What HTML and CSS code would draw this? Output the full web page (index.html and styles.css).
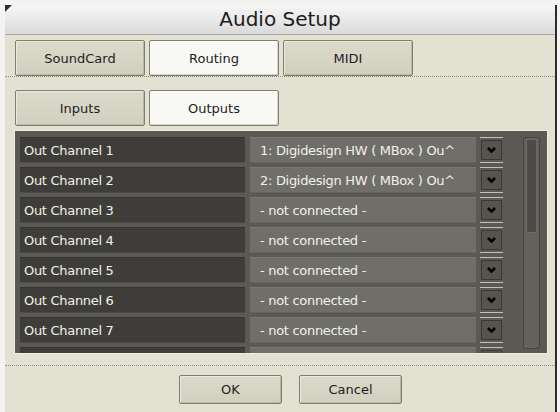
FILE: index.html
```html
<!DOCTYPE html>
<html>
<head>
<meta charset="utf-8">
<link rel="stylesheet" href="styles.css">
</head>
<body>
<div class="window">
  <div class="titlebar"><span class="corner"></span>Audio Setup</div>
  <div class="tabs">
    <div class="btn">SoundCard</div>
    <div class="btn active">Routing</div>
    <div class="btn">MIDI</div>
  </div>
  <div class="subtabs">
    <div class="btn">Inputs</div>
    <div class="btn active">Outputs</div>
  </div>
  <div class="panel">
    <div class="rows">
      <div class="row"><div class="label">Out Channel 1</div><div class="value">1: Digidesign HW ( MBox ) Ou^</div><div class="dd"><div class="ddbtn"><svg width="9" height="6" viewBox="0 0 9 6"><path d="M1 1 L4.5 4.5 L8 1" fill="none" stroke="#000" stroke-width="2.6"/></svg></div></div></div>
      <div class="row"><div class="label">Out Channel 2</div><div class="value">2: Digidesign HW ( MBox ) Ou^</div><div class="dd"><div class="ddbtn"><svg width="9" height="6" viewBox="0 0 9 6"><path d="M1 1 L4.5 4.5 L8 1" fill="none" stroke="#000" stroke-width="2.6"/></svg></div></div></div>
      <div class="row"><div class="label">Out Channel 3</div><div class="value">- not connected -</div><div class="dd"><div class="ddbtn"><svg width="9" height="6" viewBox="0 0 9 6"><path d="M1 1 L4.5 4.5 L8 1" fill="none" stroke="#000" stroke-width="2.6"/></svg></div></div></div>
      <div class="row"><div class="label">Out Channel 4</div><div class="value">- not connected -</div><div class="dd"><div class="ddbtn"><svg width="9" height="6" viewBox="0 0 9 6"><path d="M1 1 L4.5 4.5 L8 1" fill="none" stroke="#000" stroke-width="2.6"/></svg></div></div></div>
      <div class="row"><div class="label">Out Channel 5</div><div class="value">- not connected -</div><div class="dd"><div class="ddbtn"><svg width="9" height="6" viewBox="0 0 9 6"><path d="M1 1 L4.5 4.5 L8 1" fill="none" stroke="#000" stroke-width="2.6"/></svg></div></div></div>
      <div class="row"><div class="label">Out Channel 6</div><div class="value">- not connected -</div><div class="dd"><div class="ddbtn"><svg width="9" height="6" viewBox="0 0 9 6"><path d="M1 1 L4.5 4.5 L8 1" fill="none" stroke="#000" stroke-width="2.6"/></svg></div></div></div>
      <div class="row"><div class="label">Out Channel 7</div><div class="value">- not connected -</div><div class="dd"><div class="ddbtn"><svg width="9" height="6" viewBox="0 0 9 6"><path d="M1 1 L4.5 4.5 L8 1" fill="none" stroke="#000" stroke-width="2.6"/></svg></div></div></div>
      <div class="row"><div class="label"></div><div class="value"></div><div class="dd"><div class="ddbtn"></div></div></div>
    </div>
    <div class="scrollbar"><div class="thumb"></div></div>
  </div>
  <div class="footer">
    <div class="btn small">OK</div>
    <div class="btn small">Cancel</div>
  </div>
</div>
</body>
</html>
```

FILE: styles.css
```css
html, body {
  margin: 0;
  padding: 0;
  background: #f3f3f1;
  font-family: "DejaVu Sans", sans-serif;
}
.window {
  margin: 5px 0 0 5px;
  width: 550px;
  height: 407px;
  background: #e3e1d1;
  border-right: 2px solid #2b2b2b;
  position: relative;
  overflow: hidden;
}
.titlebar {
  height: 29px;
  line-height: 29px;
  text-align: center;
  font-size: 20px;
  color: #1c1c1c;
  background: linear-gradient(#f6f6f6, #e6e6e6 60%, #d9d9d9);
  border-bottom: 1px solid #a9a9a6;
  position: relative;
}
.corner {
  position: absolute;
  left: 0;
  top: 0;
  width: 7px;
  height: 7px;
  background: linear-gradient(135deg, #2e2e2e 0 45%, transparent 55%);
}
.tabs {
  display: flex;
  gap: 4px;
  margin-top: 5px;
  padding-left: 10px;
  border-bottom: 1px dotted #8f8d80;
}
.subtabs {
  display: flex;
  gap: 4px;
  margin-top: 13px;
  padding-left: 10px;
}
.btn {
  box-sizing: border-box;
  width: 130px;
  height: 36px;
  display: flex;
  align-items: center;
  justify-content: center;
  font-size: 13px;
  color: #1e1e1e;
  background: linear-gradient(#dcdacb, #d1cfbf);
  border: 1px solid #7f7d70;
  border-radius: 2px;
  box-shadow: inset 1px 1px 0 #eceadf, inset -1px -1px 0 #b9b7a8;
}
.btn.active {
  background: #f8f8f4;
  box-shadow: inset 1px 1px 0 #ffffff, inset -1px -1px 0 #d6d5cc;
}
.panel {
  box-sizing: border-box;
  margin: 4px 0 0 9px;
  width: 534px;
  height: 224px;
  background: #5b5954;
  border: 1px solid #efeee4;
  padding: 6px 7px 0 5px;
  display: flex;
  align-items: flex-start;
  gap: 20px;
  overflow: hidden;
}
.rows {
  display: flex;
  flex-direction: column;
  gap: 4px;
}
.row {
  display: flex;
  height: 26px;
}
.label, .value {
  box-sizing: border-box;
  height: 26px;
  line-height: 26px;
  font-size: 13px;
  letter-spacing: -0.3px;
  color: #f1f1ec;
  white-space: nowrap;
  overflow: hidden;
}
.label {
  width: 225px;
  padding-left: 4px;
  background: #3f3d39;
  border-top: 1px solid #363431;
  border-bottom: 1px solid #4c4a46;
}
.value {
  width: 226px;
  margin-left: 5px;
  padding-left: 10px;
  background: #706e68;
  border-top: 1px solid #7b7973;
  border-bottom: 1px solid #65635e;
}
.dd {
  box-sizing: border-box;
  width: 23px;
  height: 26px;
  margin-left: 4px;
  border-top: 1px solid #c4c2b7;
  border-bottom: 1px solid #c4c2b7;
  padding: 2px 1px;
}
.ddbtn {
  box-sizing: border-box;
  height: 20px;
  background: #56544f;
  border: 1px solid #3a3834;
  display: flex;
  align-items: center;
  justify-content: center;
}
.scrollbar {
  box-sizing: border-box;
  width: 17px;
  height: 212px;
  flex: none;
  background: #63615b;
  border: 1px solid #45433f;
  border-radius: 3px;
  padding: 1px 2px;
}
.thumb {
  height: 92px;
  background: #4d4b47;
  border: 1px solid #6c6a64;
  border-radius: 2px;
}
.footer {
  margin-top: 11px;
  border-top: 1px dotted #8f8d80;
  padding: 9px 0 0 174px;
  display: flex;
  gap: 17px;
}
.btn.small {
  width: 103px;
  height: 29px;
}
```
